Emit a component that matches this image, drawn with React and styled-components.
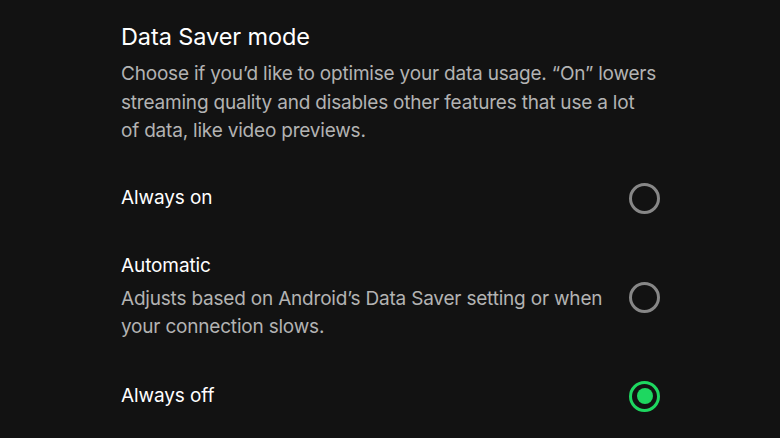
import styled, { createGlobalStyle } from "styled-components";

const Global = createGlobalStyle`
	html, body {
		margin: 0;
		background: #121212;
	}
	body {
		font-family: Inter, "Noto Sans", sans-serif;
		-webkit-font-smoothing: antialiased;
	}
`;

const Page = styled.section`
	width: 539px;
	padding: 22px 0 0 121px;
	display: flex;
	flex-direction: column;
`;

const Title = styled.h2`
	margin: 0;
	font-size: 23.5px;
	font-weight: 400;
	line-height: 30px;
	color: #ffffff;
	letter-spacing: -0.1px;
`;

const Description = styled.p`
	margin: ${(props) => props.margin || "0"};
	font-size: 19px;
	line-height: 28.5px;
	color: #b3b3b3;
	letter-spacing: -0.2px;
`;

const Options = styled.div`
	display: flex;
	flex-direction: column;
	margin-top: 37px;
	gap: 39px;
`;

const Option = styled.label`
	display: flex;
	align-items: center;
	justify-content: space-between;
	gap: 24px;
	cursor: pointer;
`;

const OptionText = styled.div`
	display: flex;
	flex-direction: column;
	gap: 6px;
`;

const Label = styled.span`
	font-size: 19px;
	line-height: 26px;
	color: #ffffff;
	letter-spacing: -0.1px;
`;

const Radio = styled.span`
	flex: none;
	box-sizing: border-box;
	width: 31px;
	height: 31px;
	border-radius: 50%;
	border: 3px solid ${(props) => (props.checked ? "#1ed760" : "#878787")};
	display: flex;
	align-items: center;
	justify-content: center;

	&::after {
		content: "";
		display: ${(props) => (props.checked ? "block" : "none")};
		width: 16px;
		height: 16px;
		border-radius: 50%;
		background: #1ed760;
	}
`;

const options = [
	{ id: "on", label: "Always on" },
	{
		id: "auto",
		label: "Automatic",
		hint: "Adjusts based on Android’s Data Saver setting or when your connection slows.",
	},
	{ id: "off", label: "Always off" },
];

const App = () => {
	const selected = "off";
	return (
		<>
			<Global />
			<Page>
				<Title>Data Saver mode</Title>
				<Description margin="8px 0 0">
					Choose if you’d like to optimise your data usage. “On” lowers streaming quality and
					disables other features that use a lot of&nbsp;data, like video previews.
				</Description>
				<Options>
					{options.map((o) => (
						<Option key={o.id}>
							<OptionText>
								<Label>{o.label}</Label>
								{o.hint && <Description>{o.hint}</Description>}
							</OptionText>
							<Radio checked={o.id === selected} />
						</Option>
					))}
				</Options>
			</Page>
		</>
	);
};

export default App;
